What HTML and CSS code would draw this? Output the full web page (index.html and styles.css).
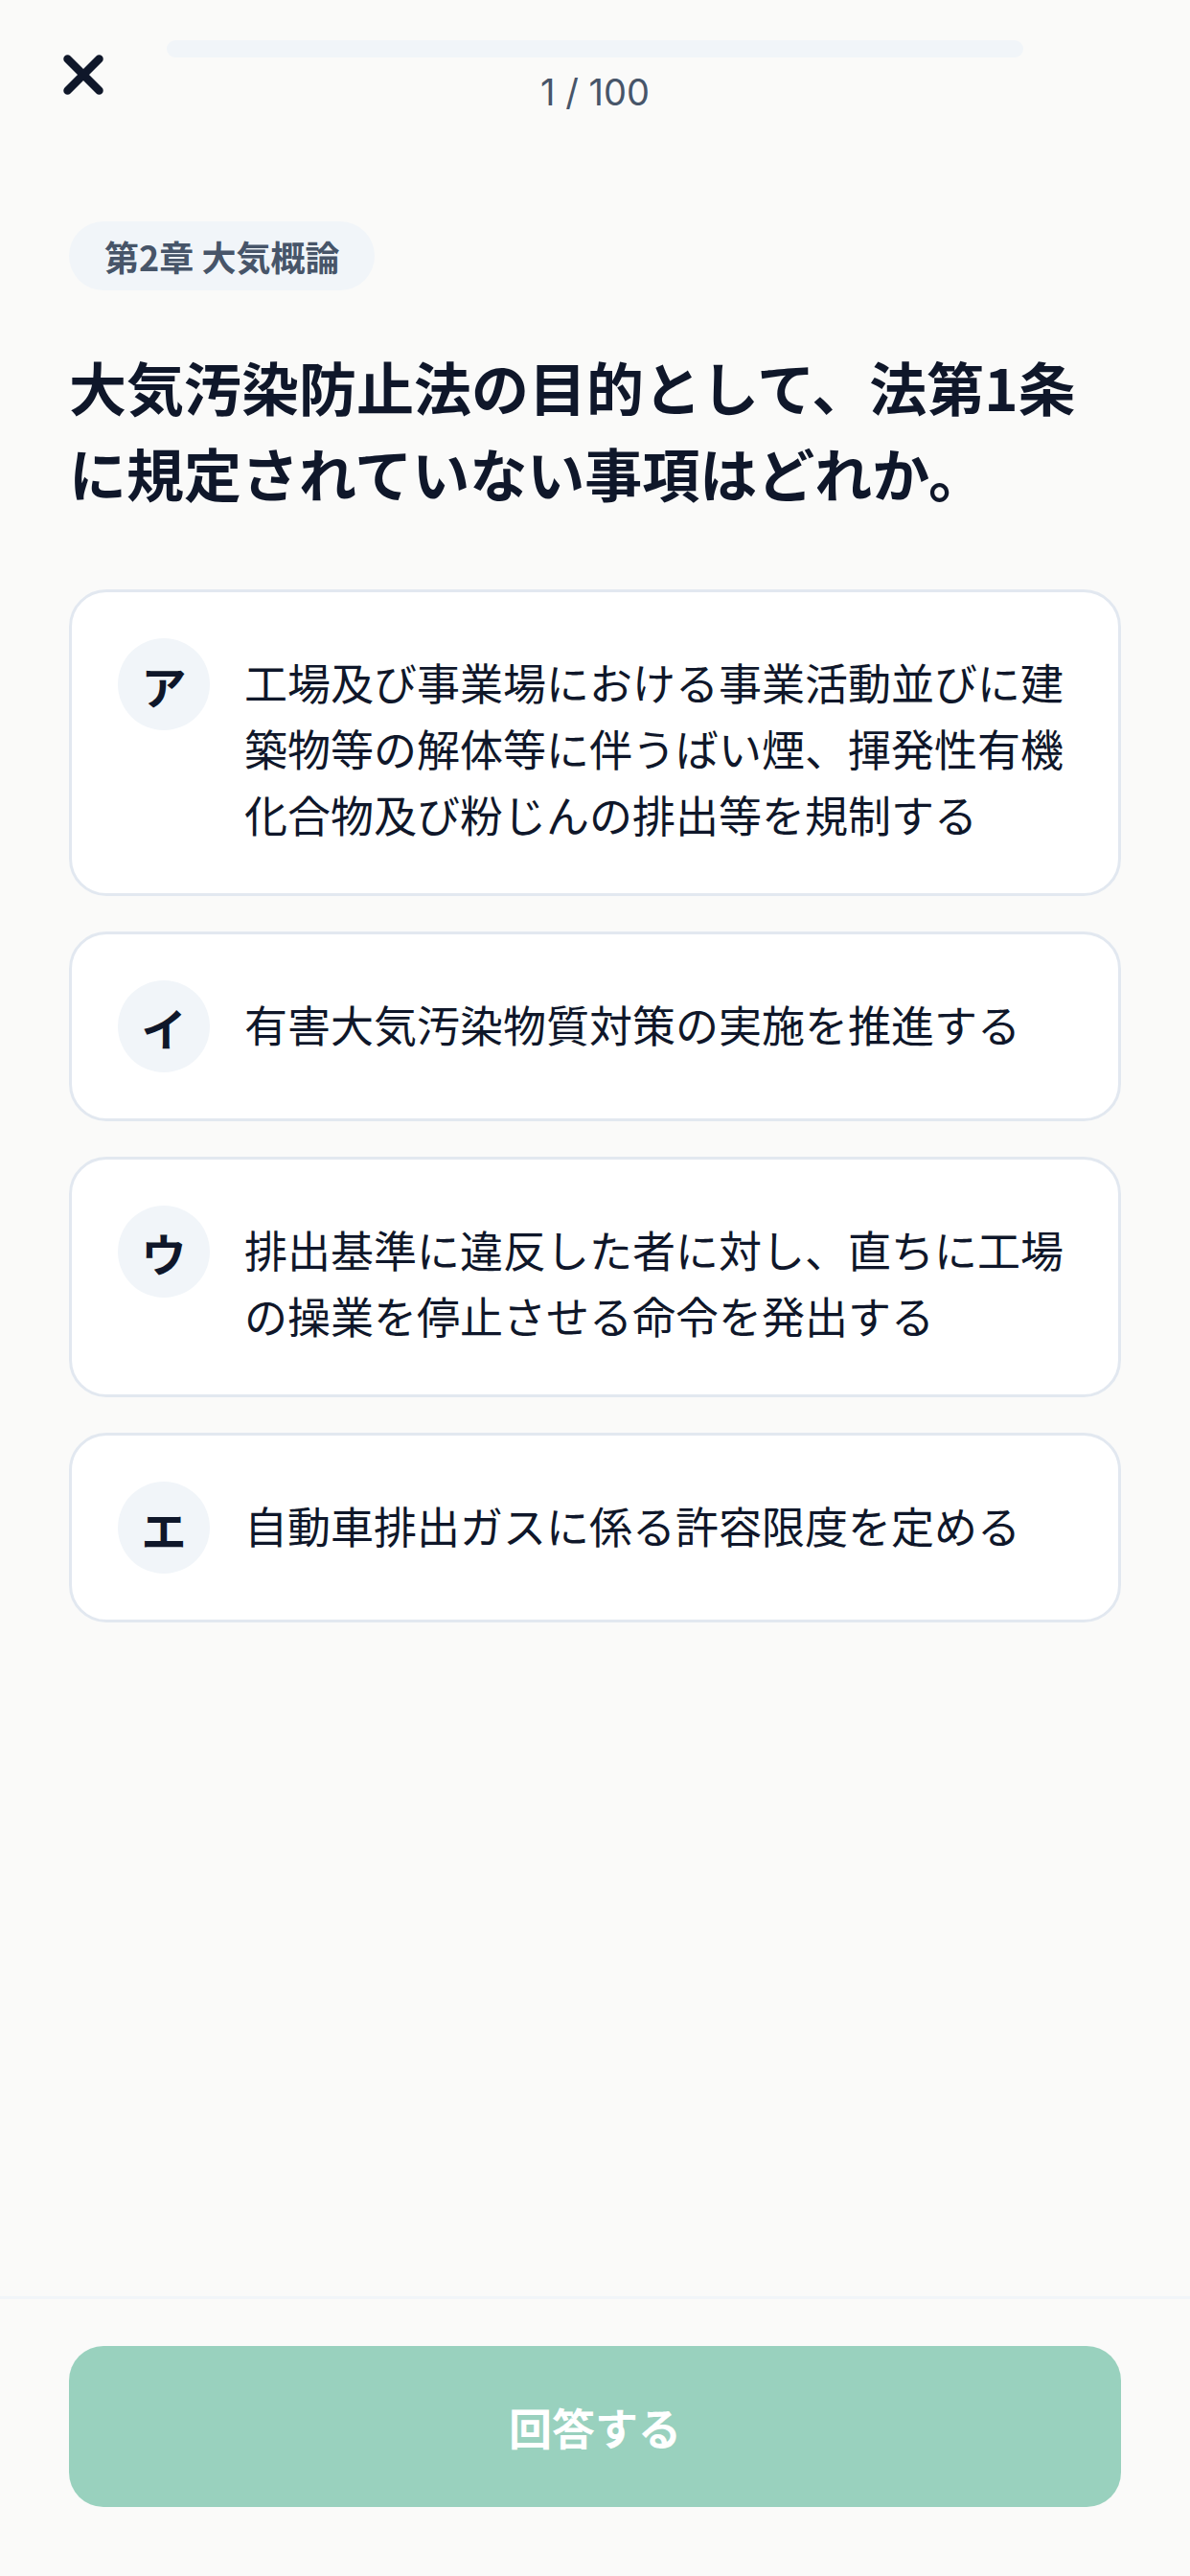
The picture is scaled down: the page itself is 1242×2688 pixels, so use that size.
FILE: index.html
```html
<!DOCTYPE html>
<html lang="ja">
<head>
<meta charset="utf-8">
<title>問題</title>
<link rel="stylesheet" href="styles.css">
</head>
<body>
<div class="screen">
  <main class="main">
    <header class="header">
      <div class="close">
        <svg width="42" height="42" viewBox="0 0 42 42" aria-hidden="true">
          <path d="M4.5 4.5 L37.5 37.5 M37.5 4.5 L4.5 37.5" stroke="#0f172a" stroke-width="8.5" stroke-linecap="round" fill="none"/>
        </svg>
      </div>
      <div class="progress">
        <div class="bar"><div class="fill" style="width:0%"></div></div>
        <div class="count">1 / 100</div>
      </div>
      <div></div>
    </header>

    <section class="content">
      <div class="chip">第2章 大気概論</div>
      <h1 class="question">大気汚染防止法の目的として、法第1条に規定されていない事項はどれか。</h1>

      <div class="options">
        <div class="option">
          <div class="letter">ア</div>
          <div class="text">工場及び事業場における事業活動並びに建築物等の解体等に伴うばい煙、揮発性有機化合物及び粉じんの排出等を規制する</div>
        </div>
        <div class="option">
          <div class="letter">イ</div>
          <div class="text">有害大気汚染物質対策の実施を推進する</div>
        </div>
        <div class="option">
          <div class="letter">ウ</div>
          <div class="text">排出基準に違反した者に対し、直ちに工場の操業を停止させる命令を発出する</div>
        </div>
        <div class="option">
          <div class="letter">エ</div>
          <div class="text">自動車排出ガスに係る許容限度を定める</div>
        </div>
      </div>
    </section>
  </main>

  <footer class="footer">
    <button class="submit" type="button">回答する</button>
  </footer>
</div>
</body>
</html>
```

FILE: styles.css
```css
* {
  box-sizing: border-box;
}

html, body {
  margin: 0;
  padding: 0;
  background: #fafaf9;
}

body {
  font-family: "Noto Sans CJK JP", "Noto Sans", sans-serif;
  color: #0f172a;
}

.screen {
  min-height: 2688px;
  display: flex;
  flex-direction: column;
}

.main {
  flex: 1;
}

.header {
  display: grid;
  grid-template-columns: 174px 1fr 174px;
  padding-top: 42px;
}

.close {
  padding-left: 66px;
  padding-top: 15px;
}

.close svg {
  display: block;
}

.progress {
  display: flex;
  flex-direction: column;
  align-items: center;
}

.bar {
  width: 100%;
  height: 18px;
  border-radius: 9px;
  background: #f1f5f9;
  overflow: hidden;
}

.fill {
  height: 100%;
  background: #059669;
}

.count {
  margin-top: 13px;
  font-family: Inter, "Noto Sans", sans-serif;
  font-size: 38px;
  line-height: 46px;
  color: #475569;
}

.content {
  padding: 0 72px;
}

.chip {
  display: block;
  width: fit-content;
  margin-top: 112px;
  padding: 18px 37px;
  border-radius: 36px;
  background: #f1f5f9;
  color: #475569;
  font-weight: 700;
  font-size: 36px;
  line-height: 36px;
}

.question {
  margin: 55px 0 0;
  font-size: 60px;
  line-height: 90px;
  font-weight: 700;
  color: #0f172a;
}

.options {
  margin-top: 77px;
  display: flex;
  flex-direction: column;
  gap: 37px;
}

.option {
  display: flex;
  align-items: flex-start;
  gap: 36px;
  padding: 48px;
  background: #ffffff;
  border: 3px solid #e2e8f0;
  border-radius: 39px;
}

.letter {
  flex: none;
  width: 96px;
  height: 96px;
  border-radius: 50%;
  background: #f1f5f9;
  display: flex;
  align-items: center;
  justify-content: center;
  font-weight: 700;
  font-size: 47px;
  line-height: 1;
  color: #0f172a;
}

.text {
  flex: 1;
  padding-top: 11px;
  font-size: 45px;
  line-height: 69px;
  color: #0f172a;
}

.footer {
  border-top: 3px solid #f1f5f9;
  padding: 49px 72px 72px;
}

.submit {
  display: block;
  width: 100%;
  height: 168px;
  border: none;
  border-radius: 36px;
  background: #99d1be;
  color: #ffffff;
  font-family: "Noto Sans CJK JP", "Noto Sans", sans-serif;
  font-weight: 700;
  font-size: 45px;
  padding: 0;
}
```
